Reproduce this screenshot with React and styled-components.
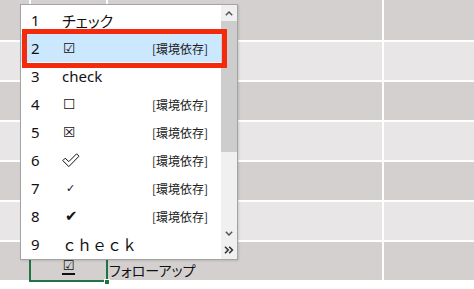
import React from 'react';
import styled, { createGlobalStyle } from 'styled-components';

const Global = createGlobalStyle`
  html, body { margin: 0; padding: 0; background: #fff; }
  body { font-family: "Noto Sans", "Noto Sans CJK JP", sans-serif; }
`;

const Page = styled.div`
  position: relative;
  width: 474px;
  height: 289px;
  overflow: hidden;
  background: #fff;
`;

const Sheet = styled.div`
  display: grid;
  grid-template-columns: 29px 75px 274px 1fr;
  grid-template-rows: 40px repeat(6, 38px);
  gap: 2px;
  background: #fff;
`;

const Cell = styled.div`
  position: relative;
  background: ${p => (p.$dark ? '#d3d0cf' : '#e8e6e6')};
  display: flex;
  align-items: flex-end;
  justify-content: ${p => (p.$center ? 'center' : 'flex-start')};
  padding: 0 0 ${p => p.$pb || 0}px ${p => p.$pl || 0}px;
  box-sizing: border-box;
  font-family: "Noto Sans CJK JP", sans-serif;
  font-feature-settings: "palt";
  font-size: 14px;
  line-height: 18px;
  color: #111;
  ${p => p.$selected && `outline: 2px solid #217346; z-index: 1;`}
`;

const Handle = styled.span`
  position: absolute;
  right: -4px;
  bottom: -5px;
  width: 4px;
  height: 4px;
  background: #217346;
  border: 1px solid #fff;
`;

const Composed = styled.span`
  font-family: "DejaVu Sans", sans-serif;
  font-size: 13px;
  line-height: 14px;
  border-bottom: 2px solid #111;
  padding: 0 1px;
`;

const Popup = styled.div`
  position: absolute;
  left: 20px;
  top: 4px;
  width: 218px;
  height: 256px;
  box-sizing: border-box;
  background: #fff;
  border: 1px solid #a3a3a3;
  box-shadow: 1px 1px 2px rgba(0, 0, 0, 0.12);
  display: flex;
  z-index: 2;
`;

const List = styled.div`
  flex: 1;
  padding-top: 1px;
  display: flex;
  flex-direction: column;
`;

const Item = styled.div`
  height: 28px;
  display: flex;
  align-items: center;
  padding: 0 13px 0 10px;
  background: ${p => (p.$active ? '#cce8ff' : 'transparent')};
  color: #111;
`;

const Num = styled.span`
  width: 31px;
  font-family: "Noto Sans", sans-serif;
  font-size: 15px;
`;

const Value = styled.span`
  flex: 1;
  display: flex;
  align-items: center;
  font-family: ${p =>
    p.$sym
      ? '"DejaVu Sans", sans-serif'
      : p.$wide
      ? '"Noto Sans CJK JP", sans-serif'
      : '"Noto Sans", "Noto Sans CJK JP", sans-serif'};
  font-feature-settings: ${p => (p.$wide ? 'normal' : '"palt"')};
  font-size: ${p => p.$size || 15}px;
  padding-left: ${p => p.$indent || 0}px;
`;

const Tag = styled.span`
  font-family: "Noto Sans CJK JP", sans-serif;
  font-size: 12px;
  color: #222;
`;

const Scrollbar = styled.div`
  width: 16px;
  background: #f0f0f0;
  display: flex;
  flex-direction: column;
`;

const SBtn = styled.div`
  height: ${p => p.$h || 16}px;
  display: flex;
  align-items: center;
  justify-content: center;
  color: #606060;
`;

const Thumb = styled.div`
  height: 131px;
  background: #cdcdcd;
`;

const Track = styled.div`
  flex: 1;
`;

const Annotation = styled.div`
  position: absolute;
  left: 1px;
  top: 24px;
  width: 205px;
  height: 39px;
  box-sizing: border-box;
  border: 5px solid #f5290b;
  z-index: 3;
`;

const OutlineCheck = () => (
  <svg width="18" height="15" viewBox="0 0 18 15">
    <path d="M0.8 7.6 L3.2 5.2 L6.8 8.6 L14.6 0.8 L17 3.2 L6.8 13.6 Z" fill="none" stroke="#111" strokeWidth="1" strokeLinejoin="round" />
  </svg>
);

const Chevron = ({ down }) => (
  <svg width="8" height="5" viewBox="0 0 8 5">
    <path d={down ? 'M0.8 0.8 L4 4 L7.2 0.8' : 'M0.8 4.2 L4 1 L7.2 4.2'} fill="none" stroke="#555" strokeWidth="1.5" />
  </svg>
);

const DoubleChevron = () => (
  <svg width="10" height="8" viewBox="0 0 10 8">
    <path d="M1 0.8 L4.2 4 L1 7.2 M5.2 0.8 L8.4 4 L5.2 7.2" fill="none" stroke="#333" strokeWidth="1.6" />
  </svg>
);

const items = [
  { n: 1, v: 'チェック' },
  { n: 2, v: '☑', sym: true, size: 14, indent: 1, tag: true, active: true },
  { n: 3, v: 'check' },
  { n: 4, v: '☐', sym: true, size: 14, indent: 1, tag: true },
  { n: 5, v: '☒', sym: true, size: 14, indent: 1, tag: true },
  { n: 6, svg: true, tag: true },
  { n: 7, v: '✓', sym: true, size: 11, indent: 4, tag: true },
  { n: 8, v: '✔', sym: true, size: 15, indent: 3, tag: true },
  { n: 9, v: 'ｃｈｅｃｋ', wide: true, size: 15, indent: 0 },
];

const rows = Array.from({ length: 7 }, (_, i) => i);

export default function App() {
  return (
    <Page>
      <Global />
      <Sheet>
        {rows.map(r =>
          [0, 1, 2, 3].map(c => {
            const dark = r % 2 === 0;
            if (r === 6 && c === 1) {
              return (
                <Cell key={`${r}-${c}`} $dark={dark} $center $pb={5} $selected>
                  <Composed>☑</Composed>
                  <Handle />
                </Cell>
              );
            }
            if (r === 6 && c === 2) {
              return (
                <Cell key={`${r}-${c}`} $dark={dark} $pl={1} $pb={1}>
                  フォローアップ
                </Cell>
              );
            }
            return <Cell key={`${r}-${c}`} $dark={dark} />;
          })
        )}
      </Sheet>
      <Popup>
        <List>
          {items.map(it => (
            <Item key={it.n} $active={it.active}>
              <Num>{it.n}</Num>
              <Value $sym={it.sym} $wide={it.wide} $size={it.size} $indent={it.indent}>
                {it.svg ? <OutlineCheck /> : it.v}
              </Value>
              {it.tag && <Tag>[環境依存]</Tag>}
            </Item>
          ))}
        </List>
        <Scrollbar>
          <SBtn><Chevron /></SBtn>
          <Thumb />
          <Track />
          <SBtn><Chevron down /></SBtn>
          <SBtn $h={18}><DoubleChevron /></SBtn>
        </Scrollbar>
        <Annotation />
      </Popup>
    </Page>
  );
}
